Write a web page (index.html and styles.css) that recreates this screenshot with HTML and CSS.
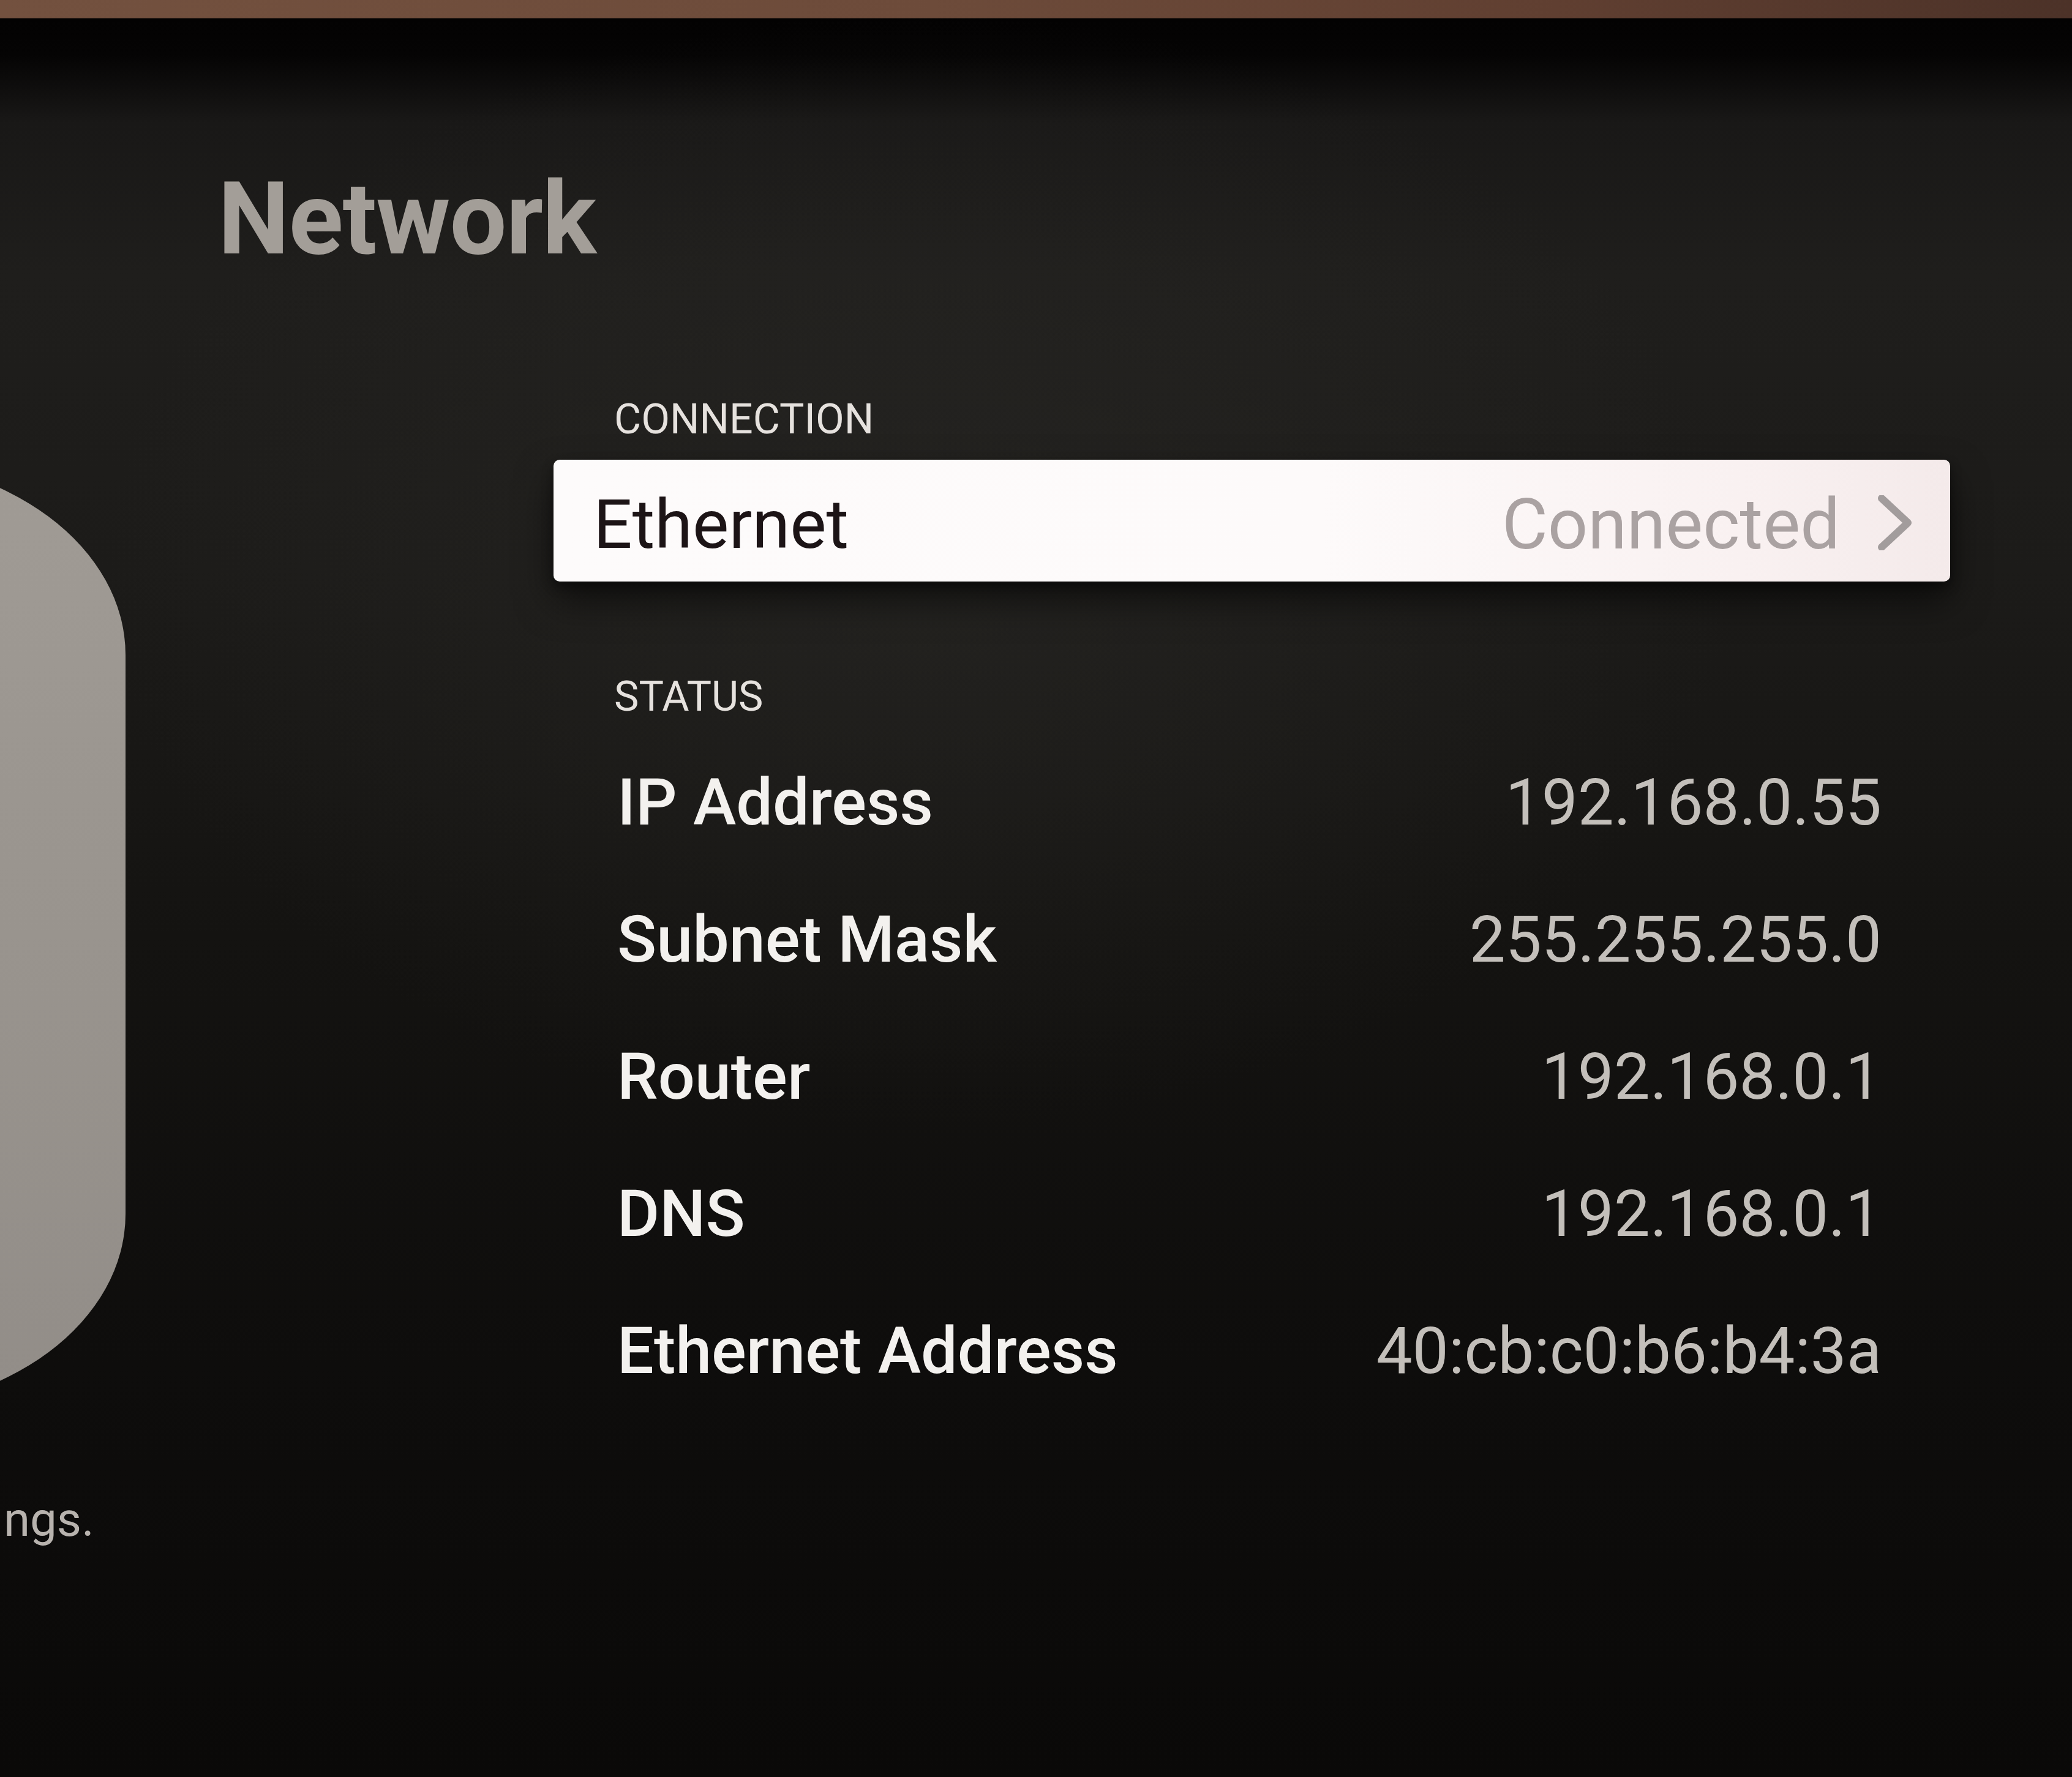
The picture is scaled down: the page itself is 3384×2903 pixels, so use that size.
FILE: index.html
```html
<!DOCTYPE html>
<html lang="en">
<head>
<meta charset="utf-8">
<title>Network</title>
<link rel="stylesheet" href="styles.css">
</head>
<body>
<div class="page">
  <div class="wall"></div>
  <div class="screen">
    <h1 class="title">Network</h1>
    <div class="main">
      <aside class="side">
        <div class="device-clip"><div class="device"></div></div>
        <p class="caption">ngs.</p>
      </aside>
      <section class="content">
        <h2 class="section-head">CONNECTION</h2>
        <div class="focus-row">
          <span class="focus-label">Ethernet</span>
          <span class="focus-value">Connected
            <svg class="chev" viewBox="0 0 56 90" width="56" height="90" aria-hidden="true"><path d="M6 5 L49 45 L6 85" fill="none" stroke="#a29c9c" stroke-width="12" stroke-linecap="round" stroke-linejoin="round"/></svg>
          </span>
        </div>
        <h2 class="section-head status-head">STATUS</h2>
        <ul class="status">
          <li><span class="lbl">IP Address</span><span class="val">192.168.0.55</span></li>
          <li><span class="lbl">Subnet Mask</span><span class="val">255.255.255.0</span></li>
          <li><span class="lbl">Router</span><span class="val">192.168.0.1</span></li>
          <li><span class="lbl">DNS</span><span class="val">192.168.0.1</span></li>
          <li><span class="lbl">Ethernet Address</span><span class="val">40:cb:c0:b6:b4:3a</span></li>
        </ul>
      </section>
    </div>
  </div>
</div>
</body>
</html>
```

FILE: styles.css
```css
* { box-sizing: border-box; }
html, body { margin: 0; padding: 0; background: #0b0a09; }
body { font-family: Roboto, "Liberation Sans", Arial, sans-serif; }

.page {
  width: 3384px;
  height: 2903px;
  overflow: hidden;
  display: flex;
  flex-direction: column;
}

.wall {
  height: 30px;
  flex: none;
  background: linear-gradient(90deg, #73513f 0%, #6d4b3a 45%, #603f31 75%, #4c3228 100%);
}

.screen {
  flex: 1;
  padding-top: 245px;
  background:
    radial-gradient(ellipse 1900px 1300px at 1500px 900px, rgba(44,43,40,0.5), rgba(44,43,40,0) 70%),
    linear-gradient(180deg, #030202 0px, #050404 60px, #191817 170px, #1f1e1c 420px, #1c1b19 900px, #141311 1500px, #0e0d0c 2200px, #0a0908 2873px);
}

.title {
  margin: 0 0 0 356px;
  font-size: 165px;
  line-height: 1;
  font-weight: 700;
  color: #a39e98;
  letter-spacing: -1px;
}

.main {
  margin-top: 211px;
  display: grid;
  grid-template-columns: 205px 2281px;
  column-gap: 699px;
}

.side {
  padding-top: 99px;
}

.device-clip {
  overflow: hidden;
}

.device {
  width: 860px;
  height: 1553px;
  margin-left: -655px;
  border-radius: 430px / 320px;
  background: linear-gradient(180deg, #a09b95 0%, #99948e 50%, #928d88 100%);
}

.caption {
  margin: 141px 0 0;
  padding-left: 6px;
  white-space: nowrap;
  font-size: 78px;
  line-height: 1;
  color: #b8b3ae;
}

.section-head {
  margin: 0 0 0 99px;
  font-size: 68px;
  line-height: 1;
  font-weight: 400;
  color: #e6e2de;
}

.focus-row {
  margin-top: 32px;
  height: 199px;
  padding: 12px 62px 0 65px;
  display: flex;
  align-items: center;
  justify-content: space-between;
  border-radius: 10px;
  background: linear-gradient(90deg, #fdfbfb 0%, #fdfafa 55%, #f9f1f1 85%, #f4eaea 100%);
  box-shadow: 0 30px 60px rgba(0,0,0,0.55), 0 8px 18px rgba(0,0,0,0.4);
}

.focus-label {
  font-size: 112px;
  line-height: 1;
  color: #1c1416;
}

.focus-value {
  display: flex;
  align-items: center;
  gap: 62px;
  font-size: 115px;
  line-height: 1;
  color: #aaa2a2;
}

.chev { display: block; margin-top: -6px; }

.status-head { margin-top: 154px; }

.status {
  list-style: none;
  margin: 27px 0 0;
  padding: 0 112px 0 104px;
}

.status li {
  height: 224px;
  display: flex;
  align-items: baseline;
  justify-content: space-between;
  line-height: 224px;
}

.lbl {
  font-size: 106px;
  font-weight: 500;
  color: #f3f1ee;
}

.val {
  font-size: 105px;
  font-weight: 400;
  color: #c3bfba;
}
```
